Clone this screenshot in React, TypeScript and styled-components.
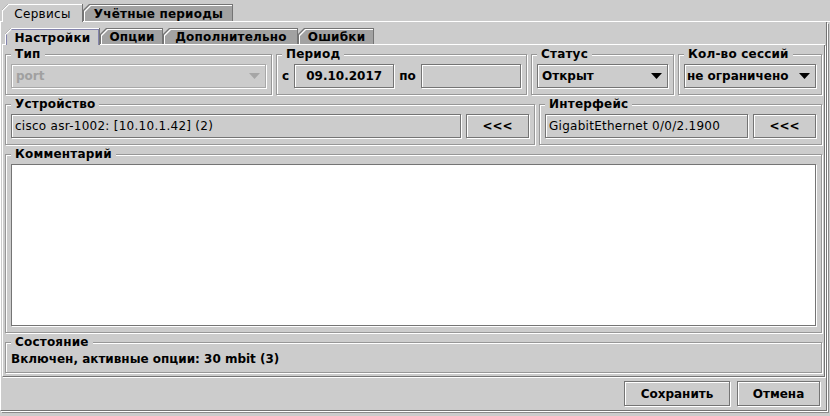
import React from 'react';
import styled, { createGlobalStyle } from 'styled-components';

const BG = '#cccccc';
const TAB_BG = '#a2a2a2';
const DARK = '#747474';
const ETCH = '#979797';

const Global = createGlobalStyle`
  html, body { margin: 0; padding: 0; background: ${BG}; }
  body { font-family: "DejaVu Sans", "Noto Sans", sans-serif; font-size: 12px; color: #000; }
  * { box-sizing: border-box; }
`;

const Window = styled.div`
  width: 830px;
  height: 416px;
  background: ${BG};
  display: flex;
  flex-direction: column;
  overflow: hidden;
`;

const TabBar = styled.div<{ $h: number; $top: number; $left: number }>`
  flex: none;
  display: flex;
  align-items: flex-end;
  height: ${p => p.$h}px;
  padding: ${p => p.$top}px 0 0 ${p => p.$left}px;
  border-bottom: 1px solid #fff;
`;

const CUT = 'polygon(0 6px, 6px 0, 100% 0, 100% 100%, 0 100%)';

const TabFrame = styled.div<{ $w: number; $h: number; $active: boolean }>`
  flex: none;
  width: ${p => p.$w}px;
  height: ${p => p.$h}px;
  margin-bottom: ${p => (p.$active ? '-1px' : '0')};
  background: ${DARK};
  padding: ${p => (p.$active ? '0 1px 0 0' : '1px 1px 0 1px')};
  clip-path: ${CUT};
`;

const TabHighlight = styled.div`
  height: 100%;
  background: #fff;
  padding: 1px 0 0 1px;
  clip-path: ${CUT};
`;

const TabFace = styled.div<{ $active: boolean; $bold: boolean }>`
  height: 100%;
  background: ${p => (p.$active ? BG : TAB_BG)};
  clip-path: ${CUT};
  display: flex;
  align-items: center;
  justify-content: center;
  font-weight: ${p => (p.$bold ? 'bold' : 'normal')};
  letter-spacing: ${p => (p.$bold ? '0.2px' : '0.3px')};
  font-size: 12px;
  line-height: 14px;
  white-space: nowrap;
`;

const FocusBox = styled.div`
  height: 100%;
  width: 100%;
  border: 1px solid #8484ad;
  border-bottom: none;
  display: flex;
  align-items: center;
  justify-content: center;
`;

const OuterPanel = styled.div`
  flex: none;
  height: 389px;
  margin: 0 3px 5px 0;
  border-left: 1px solid #fff;
  border-right: 1px solid ${DARK};
  border-bottom: 1px solid ${DARK};
  box-shadow: 1px 1px 0 #fff, 2px 2px 0 #8a8a8a;
  padding: 0 1px;
  display: flex;
  flex-direction: column;
`;

const InnerPanel = styled.div`
  flex: none;
  height: 332px;
  border-left: 1px solid #fff;
  border-right: 1px solid ${DARK};
  border-bottom: 1px solid ${DARK};
  box-shadow: 1px 1px 0 #fff;
  padding: 2px 2px 3px 2px;
  display: flex;
  flex-direction: column;
  gap: 2px;
`;

const GridRow = styled.div<{ $cols: string }>`
  display: grid;
  grid-template-columns: ${p => p.$cols};
  column-gap: 4px;
`;

const Group = styled.fieldset<{ $h: number }>`
  margin: 0;
  min-width: 0;
  height: ${p => p.$h}px;
  padding: 3px 5px 6px;
  border: 1px solid ${ETCH};
  box-shadow: inset 1px 1px 0 #fff, 1px 1px 0 #fff;
`;

const Legend = styled.legend`
  margin-left: 0;
  padding: 0 4px;
  font-weight: bold;
  font-size: 12px;
  line-height: 14px;
  letter-spacing: 0.2px;
  background: ${BG};
  white-space: nowrap;
`;

const Line = styled.div<{ $gap?: number }>`
  display: flex;
  align-items: center;
  gap: ${p => p.$gap ?? 5}px;
  height: 24px;
`;

const Field = styled.div<{ $bold?: boolean; $center?: boolean }>`
  flex: 1;
  min-width: 0;
  height: 24px;
  border: 1px solid ${DARK};
  box-shadow: inset 1px 1px 0 #fff, 1px 1px 0 #fff;
  padding: 0 3px;
  display: flex;
  align-items: center;
  justify-content: ${p => (p.$center ? 'center' : 'flex-start')};
  font-weight: ${p => (p.$bold ? 'bold' : 'normal')};
  letter-spacing: ${p => (p.$bold ? '0' : '0.27px')};
  white-space: nowrap;
  overflow: hidden;
`;

const Combo = styled.div<{ $disabled?: boolean; $pl?: number }>`
  flex: 1;
  height: 24px;
  border: 1px solid ${p => (p.$disabled ? '#a8a8a8' : DARK)};
  box-shadow: inset 1px 1px 0 #fff, 1px 1px 0 #fff;
  padding: 0 5px 0 ${p => p.$pl ?? 4}px;
  display: flex;
  align-items: center;
  gap: 4px;
  font-weight: bold;
  color: ${p => (p.$disabled ? '#a0a0a0' : '#000')};
  white-space: nowrap;
`;

const ComboValue = styled.span`
  flex: 1;
  overflow: hidden;
`;

const ArrowSvg = styled.svg`
  flex: none;
  display: block;
`;

const Label = styled.span`
  font-weight: bold;
  white-space: nowrap;
`;

const Button = styled.button<{ $w: number; $h?: number }>`
  flex: none;
  width: ${p => p.$w}px;
  height: ${p => p.$h ?? 24}px;
  margin: 0;
  padding: 0;
  border: 1px solid ${DARK};
  box-shadow: inset 1px 1px 0 #fff, 1px 1px 0 #fff;
  background: ${BG};
  font-family: inherit;
  font-size: 12px;
  font-weight: bold;
  color: #000;
  border-radius: 0;
`;

const CommentArea = styled.div`
  height: 162px;
  background: #fff;
  border: 1px solid ${DARK};
  box-shadow: 1px 1px 0 #fff;
`;

const StatusText = styled.div`
  font-weight: bold;
  line-height: 14px;
  white-space: nowrap;
`;

const ButtonRow = styled.div`
  flex: none;
  height: 33px;
  padding: 4px 5px 4px 0;
  display: flex;
  justify-content: flex-end;
  gap: 7px;
`;

const Arrow = ({ disabled }: { disabled?: boolean }) => (
  <ArrowSvg width="11" height="6" viewBox="0 0 11 6">
    <polygon points="0,0 11,0 5.5,6" fill={disabled ? '#a6a6a6' : '#000'} />
  </ArrowSvg>
);

type TabDef = { label: string; w: number; active?: boolean; bold?: boolean; focus?: boolean };

const Tab = ({ t, h }: { t: TabDef; h: number }) => (
  <TabFrame $w={t.w} $h={t.active ? h + 1 : h} $active={!!t.active}>
    <TabHighlight>
      <TabFace $active={!!t.active} $bold={t.bold !== false}>
        {t.focus ? <FocusBox>{t.label}</FocusBox> : t.label}
      </TabFace>
    </TabHighlight>
  </TabFrame>
);

const outerTabs: TabDef[] = [
  { label: 'Сервисы', w: 81, active: true, bold: false },
  { label: 'Учётные периоды', w: 150 },
];

const innerTabs: TabDef[] = [
  { label: 'Настройки', w: 95, active: true, focus: true },
  { label: 'Опции', w: 63 },
  { label: 'Дополнительно', w: 135 },
  { label: 'Ошибки', w: 76 },
];

export default function App() {
  return (
    <Window>
      <Global />
      <TabBar $h={22} $top={4} $left={2}>
        {outerTabs.map(t => (
          <Tab key={t.label} t={t} h={17} />
        ))}
      </TabBar>
      <OuterPanel>
        <TabBar $h={23} $top={6} $left={3}>
          {innerTabs.map(t => (
            <Tab key={t.label} t={t} h={16} />
          ))}
        </TabBar>
        <InnerPanel>
          <GridRow $cols="267px 251px 143px 144px">
            <Group $h={48}>
              <Legend>Тип</Legend>
              <Line>
                <Combo $disabled>
                  <ComboValue>port</ComboValue>
                  <Arrow disabled />
                </Combo>
              </Line>
            </Group>
            <Group $h={48}>
              <Legend>Период</Legend>
              <Line $gap={5}>
                <Label>с</Label>
                <Field $bold $center>09.10.2017</Field>
                <Label>по</Label>
                <Field $bold $center></Field>
              </Line>
            </Group>
            <Group $h={48}>
              <Legend>Статус</Legend>
              <Line>
                <Combo>
                  <ComboValue>Открыт</ComboValue>
                  <Arrow />
                </Combo>
              </Line>
            </Group>
            <Group $h={48}>
              <Legend>Кол-во сессий</Legend>
              <Line>
                <Combo $pl={2}>
                  <ComboValue>не ограничено</ComboValue>
                  <Arrow />
                </Combo>
              </Line>
            </Group>
          </GridRow>
          <GridRow $cols="530px 283px">
            <Group $h={48}>
              <Legend>Устройство</Legend>
              <Line>
                <Field>cisco asr-1002: [10.10.1.42] (2)</Field>
                <Button $w={63}>&lt;&lt;&lt;</Button>
              </Line>
            </Group>
            <Group $h={48}>
              <Legend>Интерфейс</Legend>
              <Line>
                <Field>GigabitEthernet 0/0/2.1900</Field>
                <Button $w={63}>&lt;&lt;&lt;</Button>
              </Line>
            </Group>
          </GridRow>
          <Group $h={186}>
            <Legend>Комментарий</Legend>
            <CommentArea />
          </Group>
          <Group $h={38}>
            <Legend>Состояние</Legend>
            <StatusText>Включен, активные опции: 30 mbit (3)</StatusText>
          </Group>
        </InnerPanel>
        <ButtonRow>
          <Button $w={106} $h={25}>Сохранить</Button>
          <Button $w={83} $h={25}>Отмена</Button>
        </ButtonRow>
      </OuterPanel>
    </Window>
  );
}
